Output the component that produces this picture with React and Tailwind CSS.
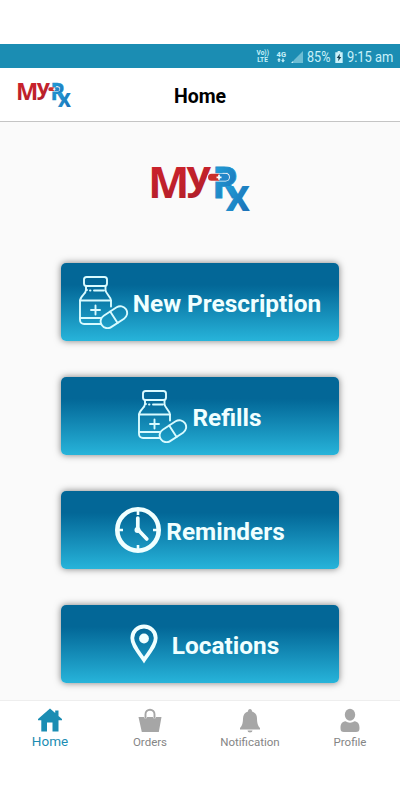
// MyRx wordmark with the capsule that joins the Y and the R
const Logo = ({ className }) => (
  <svg viewBox="0 0 104 50" className={`overflow-visible ${className}`}>
    <defs>
      <linearGradient id="logoRed" x1="0" y1="0" x2="0" y2="1">
        <stop offset="0" stopColor="#d2232c" />
        <stop offset="1" stopColor="#b01f2a" />
      </linearGradient>
      <linearGradient id="logoBlue" x1="0" y1="0" x2="1" y2="1">
        <stop offset="0" stopColor="#22abdf" />
        <stop offset="1" stopColor="#1b66b0" />
      </linearGradient>
    </defs>
    <g className="font-['Open_Sans',sans-serif] font-bold">
      <text x="0" y="34" fontSize="43" textLength="41.500" lengthAdjust="spacingAndGlyphs" fill="url(#logoRed)">
        M
      </text>
      <text x="38.500" y="24.500" fontSize="40" textLength="24.500" lengthAdjust="spacingAndGlyphs" fill="url(#logoRed)">
        y
      </text>
      <text x="64" y="34" fontSize="43" textLength="27" lengthAdjust="spacingAndGlyphs" fill="url(#logoBlue)" stroke="#2190cb" strokeWidth="0.800">
        R
      </text>
      <text x="77.500" y="47" fontSize="45" textLength="24.500" lengthAdjust="spacingAndGlyphs" fill="url(#logoBlue)">
        x
      </text>
    </g>
    <rect x="59.300" y="9.200" width="22.400" height="8.200" rx="4.100" fill="#fff" />
    <path d="M71 9.800h-7.500a3.500 3.500 0 0 0 0 7H71z" fill="#c9302c" />
    <path d="M71 9.800h6.500a3.500 3.500 0 0 1 0 7H71z" fill="#2386c8" />
    <path d="M71 10.800v5M68.500 13.300h5" stroke="#fff" strokeWidth="1.700" />
  </svg>
);

const BottleIcon = () => (
  <svg
    viewBox="0 0 50 54"
    className="h-[54px] w-[50px] shrink-0"
    fill="none"
    stroke="#d9fbff"
    strokeWidth="1.900"
    strokeLinecap="round"
    strokeLinejoin="round"
  >
    <rect x="5" y="2" width="23" height="9" rx="2.600" />
    <path d="M7 11v4c0 4-6 6-6 11v19a4 4 0 0 0 4 4H22M26.500 11v4c0 4 5.500 6 5.500 11v5.500M7 15h1" />
    <path d="M11 15.500h.500M15 15.500h10" />
    <path d="M1 25.500h31M1 43h20.500" />
    <path d="M16.500 30.500v9M12 35h9" />
    <g transform="rotate(-33 35 42)">
      <rect x="20.300" y="35.300" width="29" height="13.600" rx="6.800" />
      <path d="M34.800 35.300v13.600" />
    </g>
  </svg>
);

const ClockIcon = () => (
  <svg viewBox="0 0 46 46" className="h-[46px] w-[46px] shrink-0" fill="none" stroke="#f0ffff">
    <circle cx="23" cy="23" r="20.700" strokeWidth="4.600" />
    <path d="M23 4v4M23 38v4M4 23h4M38 23h4" strokeWidth="2.600" />
    <path d="M22.800 11v11.500l9 9.500" strokeWidth="3.700" strokeLinecap="round" strokeLinejoin="round" />
    <circle cx="22.500" cy="23" r="3" fill="#f0ffff" stroke="none" />
  </svg>
);

const PinIcon = () => (
  <svg viewBox="0 0 28 40" className="ml-[9px] h-10 w-7 shrink-0">
    <path
      d="M14 2.500C7.400 2.500 2.300 7.600 2.300 14.100c0 7.300 6.300 13.900 11.700 21.900 5.400-8 11.700-14.600 11.700-21.900C25.700 7.600 20.600 2.500 14 2.500z"
      fill="none"
      stroke="#f0ffff"
      strokeWidth="3.800"
    />
    <circle cx="14" cy="14.500" r="4.900" fill="#f0ffff" />
  </svg>
);

const actions = [
  { label: "New Prescription", icon: BottleIcon, gap: "gap-1" },
  { label: "Refills", icon: BottleIcon, gap: "gap-1" },
  { label: "Reminders", icon: ClockIcon, gap: "gap-[5px]" },
  { label: "Locations", icon: PinIcon, gap: "gap-[14px]" },
];

const tabs = [
  {
    label: "Home",
    active: true,
    icon: (
      <path d="M12 .500 0 11v1.300h3.300V23.500h5.700v-9h5.500v9h6V12.300H24V11l-3.500-3V2.500h-3.300V5z" />
    ),
  },
  {
    label: "Orders",
    icon: (
      <>
        <path d="M.500 9h5.500a1.500 1.500 0 1 0 3 0h6a1.500 1.500 0 1 0 3 0h5.500L20.800 24H3.800z" />
        <path d="M7.500 10.500V6.200a4.500 4.500 0 0 1 9 0v4.300" fill="none" stroke="currentColor" strokeWidth="1.900" />
      </>
    ),
  },
  {
    label: "Notification",
    icon: (
      <path d="M12 1c-1.300 0-2 .900-2 2.400C6.800 4.300 5 7 5 10.500c0 5-1.200 7.500-3 9.500v1.500h20V20c-1.800-2-3-4.500-3-9.500 0-3.500-1.800-6.200-5-7.100C14 1.900 13.300 1 12 1zM9.500 22.500a2.500 2 0 0 0 5 0z" />
    ),
  },
  {
    label: "Profile",
    icon: (
      <>
        <ellipse cx="12" cy="6.800" rx="5.200" ry="6" />
        <path d="M7.500 13.200c2.500 1.900 6.500 1.900 9 0 3.500.500 5 2.800 5 6.800 0 3-1 4-3.500 4H6c-2.500 0-3.500-1-3.500-4 0-4 1.500-6.300 5-6.800z" />
      </>
    ),
  },
];

const StatusBar = () => (
  <div className="flex h-6 shrink-0 items-center justify-end bg-[#1b8db3] pt-px pr-[7px] text-[#c9f1fa]">
    <div className="mr-2 w-3 text-center text-[6.500px] leading-[6.500px] font-bold">
      <div>Vo))</div>
      <div>LTE</div>
    </div>
    <div className="mr-[5px] flex flex-col items-center text-[7.500px] leading-[7px] font-bold">
      4G
      <svg viewBox="0 0 8 5" className="h-[5px] w-2" fill="currentColor">
        <path d="M2 0 0 2.200h1.300V4h1.400V2.200H4zM6 4.500 4 2.300h1.300V.500h1.400v1.800H8z" />
      </svg>
    </div>
    <svg viewBox="0 0 12 12" className="mr-1 h-3 w-3">
      <path d="M12 0v12H3V9z" fill="#6dbdd3" />
      <path d="M2.500 9.500V12H0z" fill="#c9f1fa" />
    </svg>
    <span className="w-6 text-[15px] leading-4 whitespace-nowrap">
      <span className="inline-block origin-left scale-x-[0.84]">85%</span>
    </span>
    <svg viewBox="0 0 8 13" className="mx-1 h-3 w-2">
      <path d="M2.500 0h3v1.300H8V13H0V1.300h2.500z" fill="#c9f1fa" />
      <path d="M5 3 1.500 7.500h2L3 11l3.500-4.500h-2z" fill="#173f50" />
    </svg>
    <span className="w-[46px] text-[15px] leading-4 whitespace-nowrap">
      <span className="inline-block origin-left scale-x-[0.86]">9:15 am</span>
    </span>
  </div>
);

const App = () => {
  return (
    <div className="flex h-[800px] w-[400px] flex-col overflow-hidden bg-white pt-11 font-['Roboto',sans-serif]">
      <StatusBar />

      {/* Header */}
      <header className="grid h-[54px] shrink-0 grid-cols-[1fr_auto_1fr] items-center border-b border-[#c4c4c4] px-4 pt-0.5">
        <Logo className="h-[27px] w-[56px]" />
        <h1 className="pt-0.5 text-[19.500px] font-bold text-black">Home</h1>
      </header>

      {/* Action buttons */}
      <main className="flex h-[578px] shrink-0 flex-col items-center bg-[#fafafa] pt-[42px]">
        <Logo className="h-[50px] w-[104px] shrink-0" />
        <div className="mt-[49px] flex flex-col gap-9">
          {actions.map(({ label, icon: Icon, gap }) => (
            <button
              key={label}
              className={`flex h-[78px] w-[278px] items-center justify-center rounded-[5px] bg-linear-to-b from-[#036797] from-28% to-[#27b4da] text-[24.400px] font-bold text-[#f0ffff] shadow-[0_0_7px_rgba(0,0,0,0.5)] ${gap}`}
            >
              <Icon />
              <span className="pt-[5px] whitespace-nowrap">{label}</span>
            </button>
          ))}
        </div>
      </main>

      {/* Bottom tabs */}
      <nav className="grid h-[60px] shrink-0 grid-cols-4 border-t border-[#eeeeee] bg-white">
        {tabs.map(({ label, active, icon }) => (
          <div
            key={label}
            className={`flex flex-col items-center pt-[7px] ${
              active ? "text-[#1b8db3]" : "text-[#a6a6a6]"
            }`}
          >
            <svg viewBox="0 0 24 25" className="h-[25px] w-6" fill="currentColor">
              {icon}
            </svg>
            <span
              className={
                active
                  ? "text-[13.500px] leading-[17px]"
                  : "text-[11.500px] leading-[18px] text-[#858585]"
              }
            >
              {label}
            </span>
          </div>
        ))}
      </nav>
    </div>
  );
};

export default App;
